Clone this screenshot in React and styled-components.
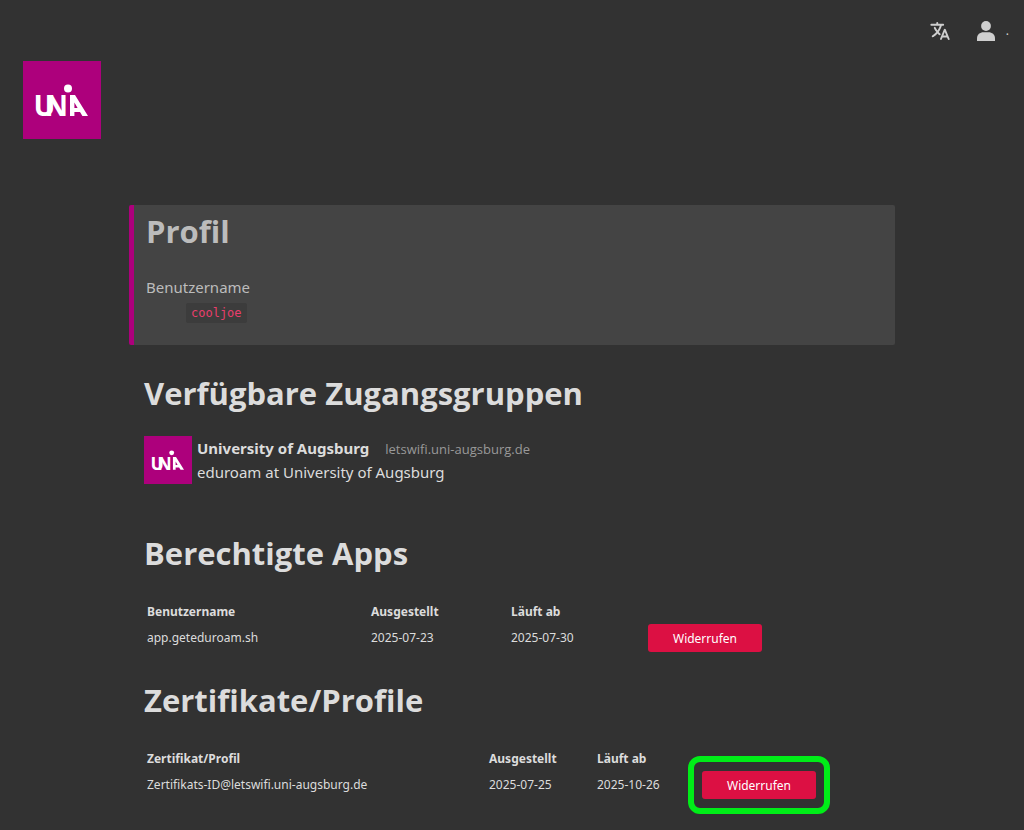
import React from 'react';
import styled, { createGlobalStyle } from 'styled-components';
import { IoLanguage } from 'react-icons/io5';

const apps = [
  { name: 'app.geteduroam.sh', issued: '2025-07-23', expires: '2025-07-30' },
];

const certificates = [
  {
    name: 'Zertifikats-ID@letswifi.uni-augsburg.de',
    issued: '2025-07-25',
    expires: '2025-10-26',
    highlighted: true,
  },
];

const Logo = ({ size }) => (
  <LogoSvg size={size} viewBox="0 0 78 78" role="img" aria-label="UNIA">
    <rect width="78" height="78" fill="#ad007c" />
    <text x="10.4 21.4" y="55" fill="#fff" fontSize="29" fontWeight="700">
      UN
    </text>
    <circle cx="45" cy="27.4" r="4" fill="#fff" />
    <path
      fill="#fff"
      fillRule="evenodd"
      d="M47 34h5L65 55h-5.6l-2.4-4h-5.6v4h-4.400zM51.4 41.5v5.6h3.2z"
    />
  </LogoSvg>
);

const PersonIcon = () => (
  <svg width="18" height="20" viewBox="0 0 18 20" fill="currentColor">
    <circle cx="9" cy="5" r="4.9" />
    <path d="M0 20v-2.4C0 13.5 3 11.3 6.5 11.3h5c3.5 0 6.5 2.2 6.5 6.3V20z" />
  </svg>
);

const TokenTable = ({ title, items, nameWidth, dateWidth, endWidth }) => (
  <Table>
    <colgroup>
      <Col width={nameWidth} />
      <Col width={dateWidth} />
      <Col width={endWidth} />
      <Col />
    </colgroup>
    <thead>
      <tr>
        <Th scope="col">{title}</Th>
        <Th scope="col">Ausgestellt</Th>
        <Th scope="col">Läuft ab</Th>
        <Th as="td" />
      </tr>
    </thead>
    <tbody>
      {items.map((item) => (
        <tr key={item.name}>
          <Td>{item.name}</Td>
          <Td>{item.issued}</Td>
          <Td>{item.expires}</Td>
          <Td>
            <RevokeButton type="button" $highlighted={item.highlighted}>
              Widerrufen
            </RevokeButton>
          </Td>
        </tr>
      ))}
    </tbody>
  </Table>
);

const App = () => {
  return (
    <>
      <GlobalStyle />
      <Header>
        <Nav>
          <IconButton type="button" aria-label="Sprache">
            <IoLanguage size={22} />
          </IconButton>
          <UserLink href="#profile">
            <PersonIcon />
            <UserName>.</UserName>
          </UserLink>
        </Nav>
        <Logo size={78} />
      </Header>
      <Main>
        <Profile id="profile">
          <Title>Profil</Title>
          <Details>
            <dt>Benutzername</dt>
            <dd>
              <Code>cooljoe</Code>
            </dd>
          </Details>
        </Profile>
        <Section>
          <Title>Verfügbare Zugangsgruppen</Title>
          <Realm>
            <Logo size={48} />
            <div>
              <RealmLine>
                <strong>University of Augsburg</strong>
                <Host>letswifi.uni-augsburg.de</Host>
              </RealmLine>
              <RealmLine>eduroam at University of Augsburg</RealmLine>
            </div>
          </Realm>
        </Section>
        <Section>
          <Title>Berechtigte Apps</Title>
          <TokenTable
            title="Benutzername"
            items={apps}
            nameWidth={224}
            dateWidth={140}
            endWidth={137}
          />
        </Section>
        <Section>
          <Title>Zertifikate/Profile</Title>
          <TokenTable
            title="Zertifikat/Profil"
            items={certificates}
            nameWidth={342}
            dateWidth={108}
            endWidth={105}
          />
        </Section>
      </Main>
    </>
  );
};

export default App;

const GlobalStyle = createGlobalStyle`
  * {
    box-sizing: border-box;
  }
  body {
    margin: 0;
    background: #323232;
    color: #dcdcdc;
    font-family: 'Noto Sans', 'Open Sans', sans-serif;
    font-size: 15px;
    line-height: 24px;
  }
`;

const Header = styled.header`
  padding: 16px 15px 0 23px;
`;

const Nav = styled.nav`
  display: flex;
  justify-content: flex-end;
  align-items: center;
  gap: 26px;
  height: 30px;
  margin-bottom: 15px;
`;

const IconButton = styled.button`
  display: flex;
  padding: 0;
  border: 0;
  background: none;
  color: #cfcfcf;
  cursor: pointer;
`;

const UserLink = styled.a`
  display: flex;
  align-items: center;
  gap: 11px;
  color: #cfcfcf;
  text-decoration: none;
`;

const UserName = styled.span`
  font-size: 12px;
`;

const LogoSvg = styled.svg`
  display: block;
  flex: none;
  width: ${({ size }) => size}px;
  height: ${({ size }) => size}px;
`;

const Main = styled.main`
  max-width: 766px;
  margin: 66px auto 0;
  padding-bottom: 20px;
`;

const Title = styled.h1`
  margin: 0;
  font-family: 'Open Sans', 'Noto Sans', sans-serif;
  font-size: 31px;
  line-height: 44px;
  font-weight: 700;
`;

const Profile = styled.section`
  padding: 4px 12px 22px;
  border-left: 5px solid #ad007c;
  border-radius: 2px;
  background: #444;
  color: #bcbcbc;
`;

const Details = styled.dl`
  margin: 22px 0 0;

  dd {
    margin: 0 0 0 40px;
  }
`;

const Code = styled.code`
  display: inline-block;
  padding: 0 5px;
  border-radius: 2px;
  background: #3c3c3c;
  color: #e83e6c;
  font-family: 'DejaVu Sans Mono', monospace;
  font-size: 12px;
  line-height: 20px;
`;

const Section = styled.section`
  padding: 0 15px;
  margin-top: 26px;
`;

const Realm = styled.div`
  display: flex;
  gap: 5px;
  margin: 21px 0 47px;
`;

const RealmLine = styled.div`
  display: flex;
  align-items: baseline;
  gap: 16px;
`;

const Host = styled.span`
  color: #999;
  font-family: 'Open Sans', 'Noto Sans', sans-serif;
  font-size: 13px;
  line-height: 20px;
`;

const Table = styled.table`
  table-layout: fixed;
  width: 100%;
  margin: 24px 0 26px;
  border-collapse: collapse;
  font-size: 12px;
`;

const Col = styled.col`
  width: ${({ width }) => (width ? `${width}px` : 'auto')};
`;

const Th = styled.th`
  padding: 0 3px;
  height: 25px;
  text-align: left;
`;

const Td = styled.td`
  padding: 0 3px;
  height: 28px;
`;

const RevokeButton = styled.button`
  position: relative;
  display: block;
  width: 114px;
  height: 28px;
  padding: 0;
  border: 0;
  border-radius: 3px;
  background: #dc1043;
  color: #fff;
  font-family: inherit;
  font-size: 12px;
  cursor: pointer;

  &::after {
    content: '';
    display: ${({ $highlighted }) => ($highlighted ? 'block' : 'none')};
    position: absolute;
    inset: -15px -14px;
    border: 6px solid #00ed18;
    border-radius: 12px;
  }
`;
